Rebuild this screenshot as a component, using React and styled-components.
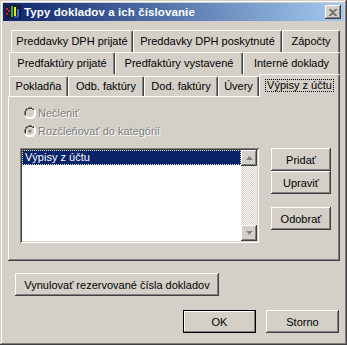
import React from 'react';
import styled, { createGlobalStyle } from 'styled-components';

const GlobalStyle = createGlobalStyle`
  html, body {
    margin: 0;
    padding: 0;
    background: #d4d0c8;
  }
  body {
    font-family: "Liberation Sans", Arial, sans-serif;
    font-size: 11px;
    color: #000;
  }
  * {
    box-sizing: border-box;
  }
`;

const raised = `
  box-shadow: inset -1px -1px #404040, inset 1px 1px #ffffff,
    inset -2px -2px #808080, inset 2px 2px #d4d0c8;
`;

const topRow = [
  { name: 'Preddavky DPH prijaté', w: 122 },
  { name: 'Preddavky DPH poskytnuté', w: 149 },
  { name: 'Zápočty', w: 58 },
];

const midRow = [
  { name: 'Predfaktúry prijaté', w: 106 },
  { name: 'Predfaktúry vystavené', w: 128 },
  { name: 'Interné doklady', w: 97 },
];

const frontRow = [
  { name: 'Pokladňa', w: 59 },
  { name: 'Odb. faktúry', w: 76 },
  { name: 'Dod. faktúry', w: 74 },
  { name: 'Úvery', w: 41 },
  { name: 'Výpisy z účtu', w: 81, active: true },
];

const AppIcon = () => (
  <svg width="16" height="16" viewBox="0 0 16 16">
    <rect x="0" y="1" width="16" height="14" fill="#1a1a3a" />
    <rect x="1" y="9" width="2" height="2" fill="#e02020" />
    <rect x="3" y="6" width="2" height="2" fill="#e02020" />
    <rect x="1" y="4" width="2" height="2" fill="#c03030" />
    <rect x="6" y="2" width="2" height="11" fill="#20c040" />
    <rect x="9" y="3" width="2" height="9" fill="#f0e020" />
    <rect x="12" y="5" width="2" height="7" fill="#3070f0" />
    <rect x="9" y="12" width="5" height="2" fill="#2050c0" />
  </svg>
);

const CloseGlyph = () => (
  <svg width="8" height="7" viewBox="0 0 8 7">
    <path d="M0 0h2l2 2 2-2h2v1L5 3.5 8 6v1H6L4 5 2 7H0V6l3-2.5L0 1z" fill="#707070" />
  </svg>
);

const Radio = ({ checked }) => (
  <svg width="12" height="12" viewBox="0 0 12 12">
    <path d="M4 0h4l2 1 1 2 1 1v4l-1 1-1 2-2 1H4l-2-1-1-2-1-1V4l1-1 1-2z" fill="#ffffff" />
    <path d="M4 0h4v1H4zM2 1h2v1H2zM8 1h2v1H8zM1 2h1v2H1zM0 4h1v4H0zM1 8h1v1H1z" fill="#808080" />
    <path d="M4 1h4v1H4zM2 2h2v1H2zM8 2h2v1H8zM1 4h1v4H1zM2 3h1v1H2z" fill="#404040" />
    <circle cx="6" cy="6" r="4" fill="#d4d0c8" />
    {checked && <circle cx="6" cy="6" r="1.6" fill="#808080" />}
  </svg>
);

const Arrow = ({ down }) => (
  <svg width="7" height="5" viewBox="0 0 7 5">
    <path d={down ? 'M1 1h6L4 4z' : 'M4 1l3 3H1z'} fill="#ffffff" />
    <path d={down ? 'M0 0h7L3.5 4z' : 'M3.5 0L7 4H0z'} fill="#808080" />
  </svg>
);

export default function App() {
  return (
    <>
      <GlobalStyle />
      <Window>
        <TitleBar>
          <AppIcon />
          <Title>Typy dokladov a ich číslovanie</Title>
          <CloseButton>
            <CloseGlyph />
          </CloseButton>
        </TitleBar>
        <Body>
          <TabStrip>
            <TabRow $indent={3}>
              {topRow.map((t) => (
                <Tab key={t.name} $w={t.w}>{t.name}</Tab>
              ))}
            </TabRow>
            <TabRow $indent={1}>
              {midRow.map((t) => (
                <Tab key={t.name} $w={t.w}>{t.name}</Tab>
              ))}
            </TabRow>
            <TabRow $indent={1}>
              {frontRow.map((t) => (
                <Tab key={t.name} $w={t.w} $front $active={t.active}>
                  {t.active ? <Focus>{t.name}</Focus> : t.name}
                </Tab>
              ))}
            </TabRow>
          </TabStrip>
          <Panel>
            <RadioRow>
              <Radio />
              <Disabled>Nečleniť</Disabled>
            </RadioRow>
            <RadioRow>
              <Radio checked />
              <Disabled>Rozčleňovať do kategórií</Disabled>
            </RadioRow>
            <ListArea>
              <ListBox>
                <Items>
                  <Item $selected>Výpisy z účtu</Item>
                </Items>
                <ScrollBar>
                  <ScrollButton>
                    <Arrow />
                  </ScrollButton>
                  <Track />
                  <ScrollButton>
                    <Arrow down />
                  </ScrollButton>
                </ScrollBar>
              </ListBox>
              <SideButtons>
                <Button $w={60}>Pridať</Button>
                <Button $w={60}>Upraviť</Button>
                <Button $w={60} $gap={13}>Odobrať</Button>
              </SideButtons>
            </ListArea>
          </Panel>
          <ResetButton $w={204}>Vynulovať rezervované čísla dokladov</ResetButton>
          <Footer>
            <Button $w={73} $default>OK</Button>
            <Button $w={73}>Storno</Button>
          </Footer>
        </Body>
      </Window>
    </>
  );
}

const Window = styled.div`
  width: 347px;
  height: 345px;
  padding: 3px;
  background: #d4d0c8;
  display: flex;
  flex-direction: column;
  box-shadow: inset -1px -1px #404040, inset 1px 1px #d4d0c8,
    inset -2px -2px #808080, inset 2px 2px #ffffff;
`;

const TitleBar = styled.div`
  height: 18px;
  display: flex;
  align-items: center;
  padding: 0 3px 0 2px;
  background: linear-gradient(to right, #0a246a, #a6caf0);
`;

const Title = styled.div`
  flex: 1;
  margin-left: 3px;
  color: #ffffff;
  font-family: "Liberation Sans", Arial, sans-serif;
  font-weight: bold;
  font-size: 11.5px;
  letter-spacing: 0.1px;
  white-space: nowrap;
`;

const CloseButton = styled.div`
  width: 16px;
  height: 14px;
  display: flex;
  align-items: center;
  justify-content: center;
  background: #d4d0c8;
  ${raised}
`;

const Body = styled.div`
  flex: 1;
  display: flex;
  flex-direction: column;
  padding: 9px 4px 0 5px;
`;

const TabStrip = styled.div`
  display: flex;
  flex-direction: column;
`;

const TabRow = styled.div`
  height: 22px;
  display: flex;
  align-items: flex-end;
  padding-left: ${(p) => p.$indent}px;
`;

const Tab = styled.div`
  width: ${(p) => p.$w}px;
  height: ${(p) => (p.$active ? 23 : p.$front ? 20 : 22)}px;
  margin-bottom: ${(p) => (p.$active ? -1 : 0)}px;
  position: ${(p) => (p.$active ? 'relative' : 'static')};
  z-index: ${(p) => (p.$active ? 1 : 'auto')};
  display: flex;
  align-items: center;
  justify-content: center;
  padding-bottom: ${(p) => (p.$active ? 2 : 1)}px;
  background: #d4d0c8;
  white-space: nowrap;
  border-top: 1px solid #ffffff;
  border-left: 1px solid #ffffff;
  border-right: 1px solid #404040;
  border-radius: 2px 2px 0 0;
  box-shadow: inset -1px 0 #808080;
`;

const Focus = styled.span`
  padding: 0 1px;
  line-height: 11px;
  outline: 1px dotted #000;
`;

const Panel = styled.div`
  height: 165px;
  padding: 8px 0 0 12px;
  box-shadow: inset -1px -1px #404040, inset 1px 1px #ffffff,
    inset -2px -2px #808080;
`;

const RadioRow = styled.div`
  height: 18px;
  display: flex;
  align-items: center;
  gap: 2px;
  margin-left: 4px;
`;

const Disabled = styled.span`
  color: #808080;
  text-shadow: 1px 1px #ffffff;
`;

const ListArea = styled.div`
  display: flex;
  align-items: flex-start;
  margin-top: 8px;
`;

const ListBox = styled.div`
  width: 239px;
  height: 95px;
  padding: 2px;
  display: flex;
  background: #ffffff;
  box-shadow: inset 1px 1px #808080, inset -1px -1px #ffffff,
    inset 2px 2px #404040, inset -2px -2px #d4d0c8;
`;

const Items = styled.div`
  flex: 1;
`;

const Item = styled.div`
  height: 15px;
  line-height: 13px;
  padding-left: 2px;
  color: ${(p) => (p.$selected ? '#ffffff' : '#000')};
  background: ${(p) => (p.$selected ? '#0a246a' : 'transparent')};
  border: 1px dotted ${(p) => (p.$selected ? '#e0e0c0' : 'transparent')};
`;

const ScrollBar = styled.div`
  width: 16px;
  display: flex;
  flex-direction: column;
`;

const ScrollButton = styled.div`
  height: 16px;
  display: flex;
  align-items: center;
  justify-content: center;
  background: #d4d0c8;
  ${raised}
`;

const Track = styled.div`
  flex: 1;
  background-color: #d4d0c8;
  background-image: conic-gradient(#ffffff 25%, #d4d0c8 0 50%, #ffffff 0 75%, #d4d0c8 0);
  background-size: 2px 2px;
`;

const SideButtons = styled.div`
  display: flex;
  flex-direction: column;
  margin-left: 12px;
`;

const Button = styled.button`
  width: ${(p) => p.$w}px;
  height: 23px;
  margin-top: ${(p) => p.$gap || 0}px;
  padding: 0;
  border: none;
  background: #d4d0c8;
  font-family: "Liberation Sans", Arial, sans-serif;
  font-size: 11px;
  font-weight: normal;
  color: #000;
  ${(p) =>
    p.$default
      ? 'box-shadow: inset 0 0 0 1px #000000, inset -2px -2px #808080, inset 2px 2px #ffffff;'
      : raised}
`;

const ResetButton = styled(Button)`
  margin-top: 12px;
  margin-left: 7px;
`;

const Footer = styled.div`
  display: flex;
  justify-content: flex-end;
  gap: 10px;
  margin-top: 14px;
  padding-right: 1px;
`;
